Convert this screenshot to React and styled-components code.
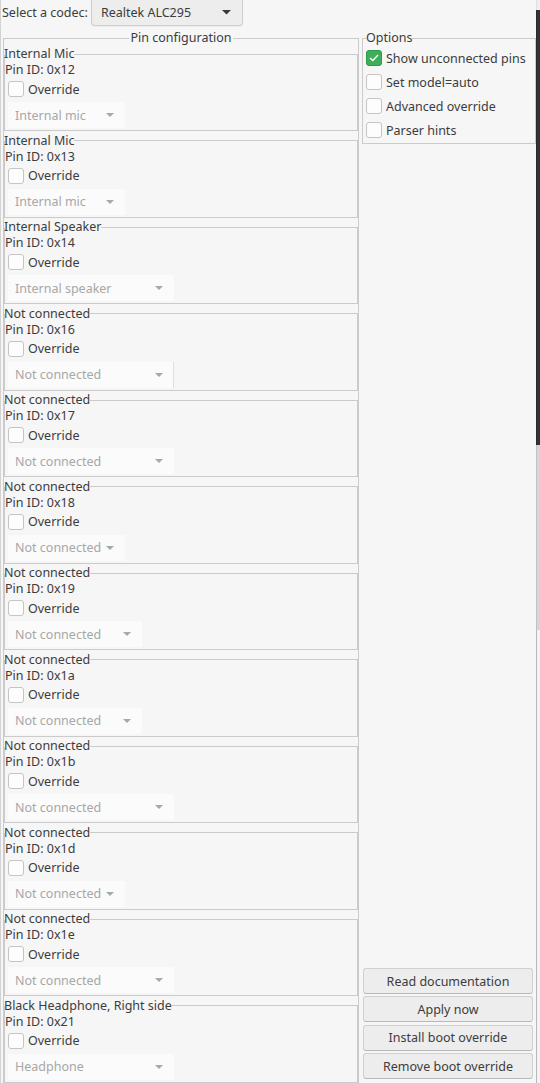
import React from 'react'
import styled, { createGlobalStyle } from 'styled-components'

const GlobalStyle = createGlobalStyle`
  html, body {
    margin: 0;
    padding: 0;
    height: 1083px;
    overflow: hidden;
    background: #f6f6f6;
  }
  body {
    font-family: "Noto Sans", "Open Sans", sans-serif;
    font-size: 12.5px;
    color: #3c3c3c;
  }
  * { box-sizing: border-box; }
`

const Screen = styled.div`
  display: flex;
  width: 540px;
  height: 1083px;
`

const Window = styled.div`
  display: flex;
  flex-direction: column;
  width: 536px;
  flex: none;
  height: 100%;
  border-left: 1px solid #d2d2d2;
  background: #f6f6f6;
`

const Strip = styled.div`
  display: flex;
  flex-direction: column;
  width: 4px;
  flex: none;
`

const StripPart = styled.div`
  height: ${props => props.h}px;
  flex: ${props => (props.h ? 'none' : 1)};
  background: ${props => props.color};
  border-left: 1px solid ${props => props.line};
`

const TopRow = styled.div`
  display: flex;
  align-items: flex-start;
  gap: 3px;
  height: 30px;
  padding-left: 1px;
`

const TopLabel = styled.span`
  line-height: 26px;
`

const CodecButton = styled.div`
  display: flex;
  align-items: center;
  justify-content: space-between;
  width: 152px;
  height: 26px;
  padding: 0 11px 0 9px;
  background: #ededed;
  border: 1px solid #cdcdcd;
  border-top: none;
  border-radius: 0 0 4px 4px;
  box-shadow: 0 1px 0 rgba(0, 0, 0, 0.04);
`

const Body = styled.div`
  display: flex;
  flex: 1;
  gap: 3px;
  padding-left: 2px;
  min-height: 0;
`

const Frame = styled.fieldset`
  margin: 0;
  padding: 0;
  min-width: 0;
  border: 1px solid #cbcbcb;
`

const PinFrame = styled(Frame)`
  width: 356px;
  height: 1053px;
`

const FrameTitle = styled.legend`
  padding: 0 ${props => (props.center ? '2px' : '0')};
  margin: ${props => (props.center ? '0 auto' : '0')};
  line-height: 16px;
  height: 16px;
`

const Group = styled(Frame)`
  display: flex;
  flex-direction: column;
  padding: 0 0 2px;
  margin-bottom: 1.5px;
  border-left-width: 0;
  border-right-width: 0;
  box-shadow: inset 1px 0 0 #cbcbcb, inset -1px 0 0 #cbcbcb;

  &:last-child {
    margin-bottom: 0;
  }
`

const PinId = styled.div`
  line-height: 16px;
  height: 16px;
  padding-left: 1px;
`

const CheckRow = styled.label`
  display: flex;
  align-items: center;
  gap: 4px;
  height: ${props => props.h || 18}px;
  margin-top: ${props => props.mt || 0}px;
  padding-left: ${props => props.pl || 0}px;
`

const Box = styled.span`
  display: flex;
  align-items: center;
  justify-content: center;
  width: 16px;
  height: 16px;
  border-radius: 3px;
  border: 1px solid ${props => (props.checked ? '#2f9a4a' : '#c4c4c4')};
  background: ${props => (props.checked ? '#3eae58' : '#fdfdfd')};
  flex: none;
`

const Combo = styled.div`
  display: flex;
  align-items: center;
  justify-content: space-between;
  width: ${props => props.w}px;
  height: 26px;
  margin: 4px 0 0 4px;
  padding: 0 10px 0 7px;
  background: #fbfbfb;
  color: #a7a7a7;
  border-right: 1px solid ${props => (props.edge ? '#dedede' : 'transparent')};
`

const Side = styled.div`
  display: flex;
  flex-direction: column;
  width: 174px;
  padding-bottom: 4px;
`

const OptionsFrame = styled(Frame)`
  padding: 0 0 1px 3px;
`

const Spacer = styled.div`
  flex: 1;
`

const Buttons = styled.div`
  display: flex;
  flex-direction: column;
  gap: 2.3px;
  margin: 0 3px 0 1px;
`

const Button = styled.div`
  display: flex;
  align-items: center;
  justify-content: center;
  height: 26px;
  background: #ededed;
  border: 1px solid #d0d0d0;
  border-bottom-color: #b9b9b9;
  border-radius: 3px;
`

const Arrow = ({ color = '#a8a8a8', w = 8 }) => (
  <svg width={w} height={w / 2} viewBox="0 0 8 4">
    <path d="M0 0 L8 0 L4 4 Z" fill={color} />
  </svg>
)

const Check = ({ checked }) => (
  <Box checked={checked}>
    {checked && (
      <svg width="10" height="8" viewBox="0 0 10 8">
        <path d="M1 4 L3.8 6.6 L9 1" fill="none" stroke="#fff" strokeWidth="1.4" />
      </svg>
    )}
  </Box>
)

const pins = [
  { name: 'Internal Mic', id: '0x12', value: 'Internal mic', w: 117 },
  { name: 'Internal Mic', id: '0x13', value: 'Internal mic', w: 117 },
  { name: 'Internal Speaker', id: '0x14', value: 'Internal speaker', w: 166 },
  { name: 'Not connected', id: '0x16', value: 'Not connected', w: 166, edge: true },
  { name: 'Not connected', id: '0x17', value: 'Not connected', w: 166 },
  { name: 'Not connected', id: '0x18', value: 'Not connected', w: 117 },
  { name: 'Not connected', id: '0x19', value: 'Not connected', w: 134 },
  { name: 'Not connected', id: '0x1a', value: 'Not connected', w: 134 },
  { name: 'Not connected', id: '0x1b', value: 'Not connected', w: 166 },
  { name: 'Not connected', id: '0x1d', value: 'Not connected', w: 117 },
  { name: 'Not connected', id: '0x1e', value: 'Not connected', w: 166 },
  { name: 'Black Headphone, Right side', id: '0x21', value: 'Headphone', w: 166 },
]

const options = [
  { label: 'Show unconnected pins', checked: true },
  { label: 'Set model=auto', checked: false },
  { label: 'Advanced override', checked: false },
  { label: 'Parser hints', checked: false },
]

const actions = ['Read documentation', 'Apply now', 'Install boot override', 'Remove boot override']

const PinGroup = ({ pin }) => (
  <Group>
    <FrameTitle>{pin.name}</FrameTitle>
    <PinId>{`Pin ID: ${pin.id}`}</PinId>
    <CheckRow mt={2} pl={4}>
      <Check />
      <span>Override</span>
    </CheckRow>
    <Combo w={pin.w} edge={pin.edge}>
      <span>{pin.value}</span>
      <Arrow />
    </Combo>
  </Group>
)

const App = () => (
  <>
    <GlobalStyle />
    <Screen>
      <Window>
        <TopRow>
          <TopLabel>Select a codec:</TopLabel>
          <CodecButton>
            <span>Realtek ALC295</span>
            <Arrow color="#3a3a3a" w={9} />
          </CodecButton>
        </TopRow>
        <Body>
          <PinFrame>
            <FrameTitle center>Pin configuration</FrameTitle>
            {pins.map(pin => (
              <PinGroup key={pin.id} pin={pin} />
            ))}
          </PinFrame>
          <Side>
            <OptionsFrame>
              <FrameTitle>Options</FrameTitle>
              {options.map(opt => (
                <CheckRow key={opt.label} h={24}>
                  <Check checked={opt.checked} />
                  <span>{opt.label}</span>
                </CheckRow>
              ))}
            </OptionsFrame>
            <Spacer />
            <Buttons>
              {actions.map(a => (
                <Button key={a}>{a}</Button>
              ))}
            </Buttons>
          </Side>
        </Body>
      </Window>
      <Strip>
        <StripPart h={10} color="#eeeeee" line="#e0e0e0" />
        <StripPart h={435} color="#333333" line="#2a2a2a" />
        <StripPart h={185} color="#d6d6d6" line="#c2c2c2" />
        <StripPart color="#f3f3f3" line="#b8b8b8" />
      </Strip>
    </Screen>
  </>
)

export default App
